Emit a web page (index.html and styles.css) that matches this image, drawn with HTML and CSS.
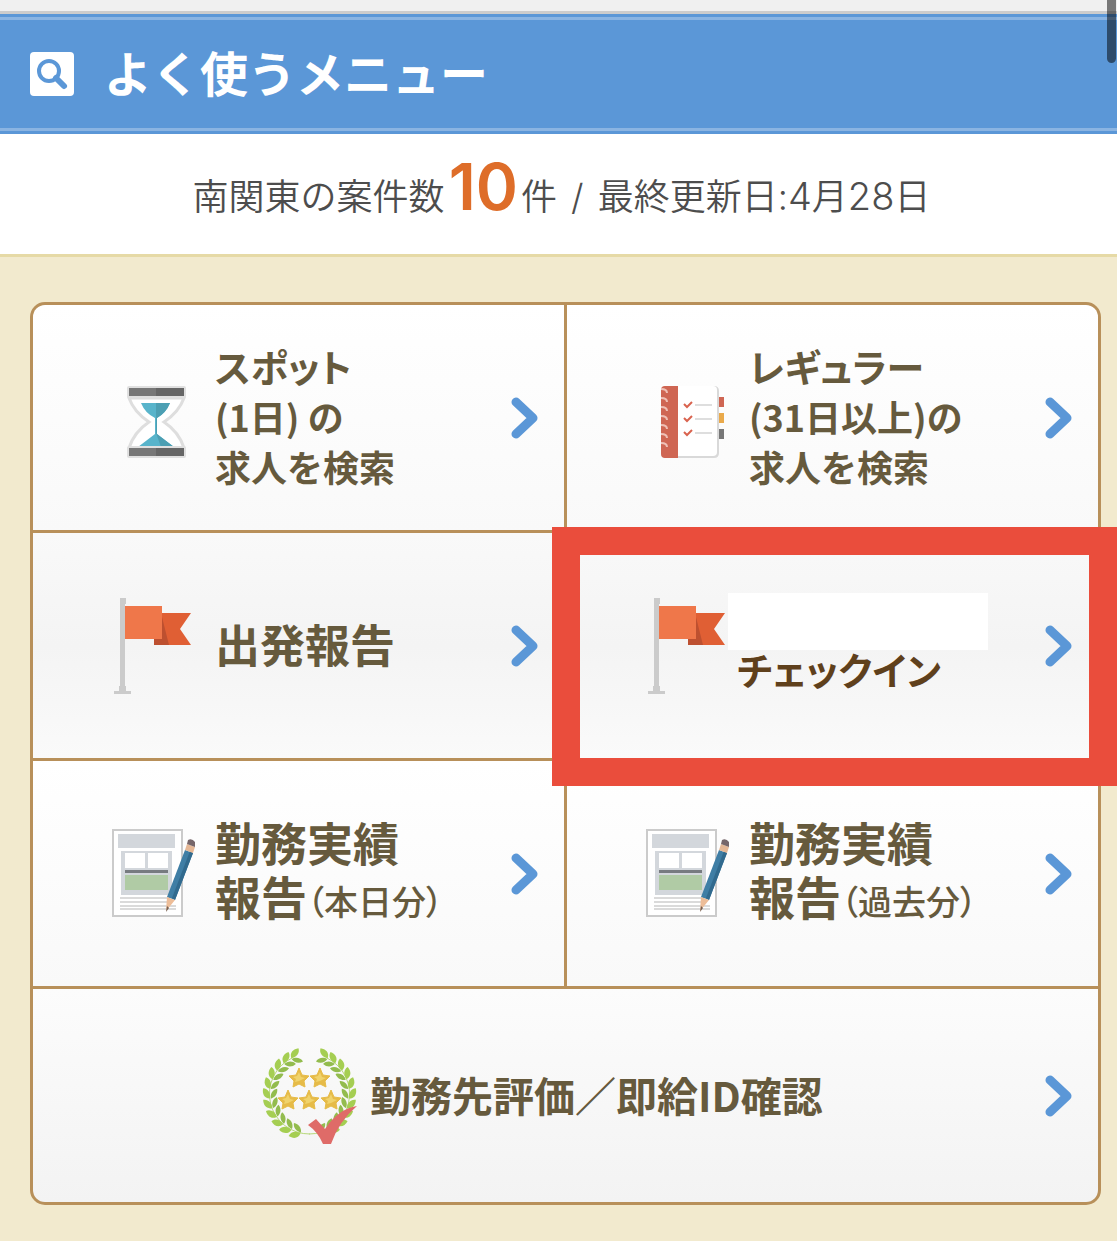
FILE: index.html
```html
<!DOCTYPE html>
<html lang="ja">
<head>
<meta charset="utf-8">
<meta name="viewport" content="width=device-width, initial-scale=1">
<title>よく使うメニュー</title>
<link rel="stylesheet" href="styles.css">
</head>
<body>
<svg class="defs" aria-hidden="true">
  <symbol id="arrow" viewBox="0 0 28 42">
    <path d="M5 5 L22 21 L5 37" fill="none" stroke="#5b97d7" stroke-width="9" stroke-linecap="round" stroke-linejoin="round"/>
  </symbol>
  <symbol id="flag" viewBox="0 0 84 96">
    <path d="M8 0h6v6h-1v82h1v5h5v3H2v-3h5v-5h1z" fill="#cbcbcb"/>
    <path d="M42 15h37l-11 16 11 16H42z" fill="#e05f34"/>
    <path d="M42 15h7l8 32H42z" fill="#bd5030"/>
    <path d="M13 8h37v33H13z" fill="#ef774a"/>
  </symbol>
  <symbol id="report" viewBox="0 1 84 96">
    <path d="M1 5h69v86H1z" fill="#fff" stroke="#cbcbcb" stroke-width="2"/>
    <path d="M6 9h57v14H6z" fill="#d3d7dc"/>
    <path d="M9 26h51v44H9z" fill="#d3d7dc"/>
    <path d="M13 28h20v15H13zM36 28h20v15H36z" fill="#fff"/>
    <path d="M13 45h43v3H13z" fill="#777b80"/>
    <path d="M13 50h43v15H13z" fill="#b0cba5"/>
    <path d="M8 73h50M8 77h50M8 81h56M8 84h56" stroke="#b5b5b5" stroke-width="1"/>
    <path d="M73 25l8 3-18 47-8-3z" fill="#3f7ea5"/>
    <path d="M78 26l3 2-18 47-3-2z" fill="#316a8e"/>
    <path d="M75 19l8 3-2 6-8-3z" fill="#e5b795"/>
    <path d="M76 15q4-2 7 2v5l-8-3z" fill="#76666a"/>
    <path d="M55 72l8 3-9 11z" fill="#edbd98"/>
    <path d="M55 81l2 2-3 4z" fill="#765f51"/>
  </symbol>
  <g id="leaves">
    <path d="M43 6C43 0 48-2 53-1 53 4 48 7 43 6z" fill="#a5ce52"/>
    <path d="M43 7C47 6 52 8 53 13 48 14 44 11 43 7z" fill="#93bc4e"/>
  </g>
  <g id="branch">
    <path d="M49 86A40 40 0 0 1 31 10" fill="none" stroke="#b7d87a" stroke-width="1"/>
    <use href="#leaves" transform="rotate(-158 49 46)"/>
    <use href="#leaves" transform="rotate(-144 49 46)"/>
    <use href="#leaves" transform="rotate(-130 49 46)"/>
    <use href="#leaves" transform="rotate(-116 49 46)"/>
    <use href="#leaves" transform="rotate(-102 49 46)"/>
    <use href="#leaves" transform="rotate(-88 49 46)"/>
    <use href="#leaves" transform="rotate(-74 49 46)"/>
    <use href="#leaves" transform="rotate(-60 49 46)"/>
    <use href="#leaves" transform="rotate(-46 49 46)"/>
    <use href="#leaves" transform="rotate(-32 49 46)"/>
    <use href="#leaves" transform="rotate(-19 49 46)"/>
  </g>
  <g id="star">
    <path d="M0-10L3-3 10-2 5 3 6 9 0 6-6 9-5 3-10-2-3-3z" fill="#e6bb48" stroke="#e6bb48" stroke-width="1" stroke-linejoin="round"/>
    <path d="M0-6L2-1 6 0 0 3-4 4-3 1-6-1-2-2z" fill="#f0d36c"/>
  </g>
</svg>

<div class="top-strip"></div>
<header class="page-head">
  <svg class="search-icon" viewBox="0 0 44 44" aria-hidden="true">
    <rect width="44" height="44" rx="4" fill="#fff"/>
    <circle cx="19" cy="19" r="10" fill="none" stroke="#5b97d7" stroke-width="4"/>
    <path d="M26 26l8 8" stroke="#5b97d7" stroke-width="6" stroke-linecap="round"/>
  </svg>
  <h1 class="page-title">よく使うメニュー</h1>
</header>
<div class="scroll-thumb"></div>

<p class="summary">南関東の案件数<strong class="count">10</strong>件<span class="slash"> / </span>最終更新日:<span class="digits">4</span>月<span class="digits">28</span>日</p>

<main class="content">
  <nav class="menu" aria-label="よく使うメニュー">
    <a class="item" href="#spot">
      <svg class="icon" viewBox="0 -11 84 96" aria-hidden="true">
        <path d="M17 17h55Q67 31 52 41 67 51 72 67H17Q22 51 37 41 22 31 17 17z" fill="#fff" stroke="#dedede" stroke-width="3"/>
        <path d="M29 22h29q-4 10-13 15v16l17 13H26l17-13V37Q33 32 29 22z" fill="#58b4cb"/>
        <path d="M44 22h14q-4 10-13 15v16l17 13H49l-5-14z" fill="#4c9fb3"/>
        <rect x="15" y="5" width="59" height="12" rx="2" fill="#e0e0e0"/>
        <rect x="15" y="65" width="59" height="12" rx="2" fill="#e0e0e0"/>
        <path d="M17 7h27v8H17zM17 67h27v8H17z" fill="#777"/>
        <path d="M44 7h28v8H44zM44 67h28v8H44z" fill="#666"/>
      </svg>
      <span class="label"><span class="kana">スポット</span><br>(1日) の<br>求人を検索</span>
      <svg class="arrow" aria-hidden="true"><use href="#arrow"/></svg>
    </a>
    <a class="item" href="#regular">
      <svg class="icon" viewBox="0 -11 84 96" aria-hidden="true">
        <path d="M18 5h50q5 0 5 5v62q0 5-5 5H18z" fill="#d9d9d9"/>
        <path d="M31 5h36q4 0 4 4v62q0 4-4 4H31z" fill="#fff"/>
        <path d="M32 5v72H19q-4 0-4-4V9q0-4 4-4z" fill="#cf6653"/>
        <path d="M73 16h5v10h-5z" fill="#cf6653"/>
        <path d="M73 32h5v10h-5z" fill="#eaaa4b"/>
        <path d="M73 48h5v10h-5z" fill="#777"/>
        <path d="M15 8q6 0 6 4M15 17q6 0 6 4M15 26q6 0 6 4M15 35q6 0 6 4M15 44q6 0 6 4M15 53q6 0 6 4M15 62q6 0 6 4" fill="none" stroke="#efc0b6" stroke-width="2"/>
        <path d="M38 23l3 3 5-5M38 37l3 3 5-5M38 51l3 3 5-5" fill="none" stroke="#d9634f" stroke-width="2"/>
        <path d="M49 24h17M49 38h17M49 52h17" stroke="#dedede" stroke-width="2"/>
      </svg>
      <span class="label"><span class="kana">レギュラー</span><br>(31日以上)の<br>求人を検索</span>
      <svg class="arrow" aria-hidden="true"><use href="#arrow"/></svg>
    </a>
    <a class="item item-gray" href="#departure">
      <svg class="icon" aria-hidden="true"><use href="#flag"/></svg>
      <span class="label label-medium">出発報告</span>
      <svg class="arrow" aria-hidden="true"><use href="#arrow"/></svg>
    </a>
    <a class="item item-gray" href="#checkin">
      <svg class="icon" aria-hidden="true"><use href="#flag"/></svg>
      <span class="label label-checkin"><span class="kana">チェックイン</span></span>
      <svg class="arrow" aria-hidden="true"><use href="#arrow"/></svg>
      <span class="cover"></span>
      <span class="marker"></span>
    </a>
    <a class="item" href="#report-today">
      <svg class="icon" aria-hidden="true"><use href="#report"/></svg>
      <span class="label label-large">勤務実績<br>報告<span class="note">（本日分）</span></span>
      <svg class="arrow" aria-hidden="true"><use href="#arrow"/></svg>
    </a>
    <a class="item" href="#report-past">
      <svg class="icon" aria-hidden="true"><use href="#report"/></svg>
      <span class="label label-large">勤務実績<br>報告<span class="note">（過去分）</span></span>
      <svg class="arrow" aria-hidden="true"><use href="#arrow"/></svg>
    </a>
    <a class="item item-wide" href="#rating">
      <svg class="icon icon-wreath" viewBox="0 0 96 96" aria-hidden="true">
        <use href="#branch"/>
        <use href="#branch" transform="translate(97 0) scale(-1 1)"/>
        <use href="#star" x="38" y="30"/>
        <use href="#star" x="59" y="30"/>
        <use href="#star" x="27" y="52"/>
        <use href="#star" x="48" y="52"/>
        <use href="#star" x="70" y="52"/>
        <path d="M47 77l8-6 9 10Q77 61 96 58q-18 15-26 38h-8Q57 84 47 77z" fill="#df6b68"/>
      </svg>
      <span class="label label-wide">勤務先評価／即給ID確認</span>
      <svg class="arrow" aria-hidden="true"><use href="#arrow"/></svg>
    </a>
  </nav>
</main>
</body>
</html>
```
FILE: styles.css
```css
* {
  box-sizing: border-box;
}

body {
  position: relative;
  margin: 0;
  background: #f2eace;
  color: #4d4d4d;
  font-family: Inter, "Noto Sans CJK JP", sans-serif;
}

.defs {
  position: absolute;
  width: 0;
  height: 0;
}

.top-strip {
  height: 11px;
  background: #f0f0f0;
}

.page-head {
  display: flex;
  align-items: center;
  gap: 30px;
  height: 123px;
  padding: 0 30px;
  border-top: 3px solid #ccc;
  background:
    linear-gradient(#8ab4e2, #8ab4e2) 0 3px / 100% 3px no-repeat,
    linear-gradient(#8ab4e2, #8ab4e2) 0 calc(100% - 3px) / 100% 3px no-repeat,
    #5b97d7;
}

.search-icon {
  width: 44px;
  height: 44px;
}

.page-title {
  margin: 0;
  padding-bottom: 6px;
  color: #fff;
  font-family: "Noto Sans CJK JP", sans-serif;
  font-size: 48px;
  font-weight: 700;
  line-height: 60px;
}

.scroll-thumb {
  position: absolute;
  top: 0;
  right: 1px;
  width: 9px;
  height: 63px;
  border-radius: 0 0 5px 5px;
  background: rgba(0, 0, 0, 0.5);
}

.summary {
  margin: 0;
  padding: 22px 16px 17px 22px;
  border-bottom: 3px solid #e6daa6;
  background: #fff;
  font-size: 36px;
  font-weight: 350;
  line-height: 80px;
  text-align: center;
}

.count {
  padding: 0 3px 0 4px;
  color: #de6d29;
  font-size: 64px;
  font-weight: 600;
  line-height: 60px;
}

.slash {
  padding: 0 4px;
}

.digits {
  font-size: 38px;
}

.content {
  padding: 45px 16px 36px 30px;
}

.menu {
  display: grid;
  grid-template-columns: 1fr 1fr;
  gap: 3px;
  border: 3px solid #b8905a;
  border-radius: 15px;
  background: #b8905a;
}

.item {
  position: relative;
  display: flex;
  align-items: center;
  min-height: 225px;
  padding: 0 25px 0 79px;
  background: linear-gradient(#fff, #f9f9f9);
  color: #665a3d;
  text-decoration: none;
}

.item:first-child {
  border-top-left-radius: 12px;
}

.item:nth-child(2) {
  border-top-right-radius: 12px;
}

.item-gray {
  background: linear-gradient(#f9f9f9, #f4f4f4 50%, #fafafa);
}

.item-wide {
  grid-column: 1 / -1;
  min-height: 213px;
  padding-left: 228px;
  border-radius: 0 0 12px 12px;
  background: linear-gradient(#fcfcfc, #f3f3f3);
}

.icon {
  flex: none;
  width: 84px;
  height: 96px;
  margin-right: 19px;
}

.icon-wreath {
  width: 96px;
  margin-right: 13px;
}

.arrow {
  flex: none;
  width: 28px;
  height: 42px;
  margin-left: auto;
}

.label {
  padding-bottom: 4px;
  font-family: "Noto Sans CJK JP", sans-serif;
  font-size: 36px;
  font-weight: 700;
  line-height: 50px;
  white-space: nowrap;
}

.kana {
  font-size: 38px;
  font-feature-settings: "palt";
}

.label-medium {
  font-size: 45px;
}

.label-large {
  padding-bottom: 0;
  font-family: "Liberation Sans", "Noto Sans CJK JP", sans-serif;
  font-size: 46px;
  line-height: 54px;
}

.label-wide {
  font-size: 41px;
}

.label-checkin {
  align-self: flex-end;
  margin-bottom: 60px;
  margin-left: -12px;
  color: #5f401c;
}

.note {
  font-size: 34px;
  font-weight: 500;
  font-feature-settings: "palt";
}

.cover {
  position: absolute;
  top: 60px;
  left: 161px;
  width: 260px;
  height: 57px;
  background: #fff;
}

.marker {
  position: absolute;
  z-index: 1;
  inset: -6px -19px -28px -15px;
  border: 28px solid #ea4d3c;
}
```
